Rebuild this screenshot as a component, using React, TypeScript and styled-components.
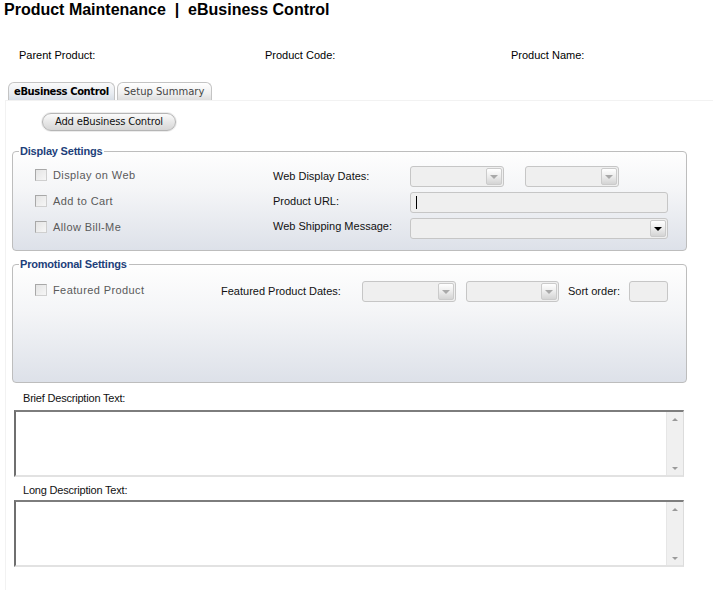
import React from 'react';
import styled, { createGlobalStyle } from 'styled-components';

const GlobalStyle = createGlobalStyle`
  html, body {
    margin: 0;
    padding: 0;
    background: #ffffff;
    font-family: 'Liberation Sans', Arial, sans-serif;
    font-size: 11px;
    color: #000;
  }
`;

const Page = styled.div`
  width: 713px;
  height: 590px;
  overflow: hidden;
`;

const Title = styled.h1`
  margin: 0;
  padding-left: 4px;
  font-size: 16px;
  line-height: 19px;
  font-weight: bold;
  white-space: pre;
`;

const InfoRow = styled.div`
  display: grid;
  grid-template-columns: 246px 246px 1fr;
  margin-top: 30px;
  padding-left: 19px;
  line-height: 13px;
`;

const TabStrip = styled.div`
  display: flex;
  gap: 2px;
  margin-top: 20px;
  padding-left: 8px;
`;

const Tab = styled.div<{ $active?: boolean }>`
  height: 18px;
  box-sizing: border-box;
  padding: ${p => (p.$active ? '0 5px' : '0 7px 0 6px')};
  border: 1px solid #c4c4c4;
  border-bottom: none;
  border-radius: 6px 6px 0 0;
  font-family: 'DejaVu Sans', Tahoma, sans-serif;
  font-size: 10px;
  line-height: 17px;
  font-weight: ${p => (p.$active ? 'bold' : 'normal')};
  color: ${p => (p.$active ? '#000' : '#444')};
  letter-spacing: ${p => (p.$active ? '-0.4px' : '0')};
  background: ${p =>
    p.$active
      ? 'linear-gradient(#fafafa, #e9edf2 60%, #d8dee6)'
      : 'linear-gradient(#ffffff, #f0f0f0 60%, #dedede)'};
`;

const Panel = styled.div`
  margin-left: 5px;
  border-left: 1px solid #f2f2f2;
  border-top: 1px solid #f2f2f2;
  padding: 12px 0 30px 6px;
`;

const PillButton = styled.button`
  display: block;
  margin-left: 30px;
  height: 18px;
  padding: 0 12px;
  border: 1px solid #b5b5b5;
  border-radius: 9px;
  background: linear-gradient(#fbfbfb, #e6e6e6 55%, #d6d6d6);
  box-shadow: 0 0 0 1px #ececec;
  font-family: 'DejaVu Sans', Tahoma, sans-serif;
  font-size: 10px;
  letter-spacing: -0.2px;
  color: #111;
  line-height: 16px;
`;

const Group = styled.fieldset<{ $gap: number; $top: number; $bottom: number }>`
  margin: ${p => p.$gap}px 0 0 0;
  width: 675px;
  box-sizing: border-box;
  padding: ${p => p.$top}px 18px ${p => p.$bottom}px 22px;
  border: 1px solid #bdbdbd;
  border-radius: 4px;
  background: linear-gradient(#fefefe, #f4f5f7 40%, #dde1e9);
`;

const Legend = styled.legend`
  margin-left: -16px;
  padding: 0 2px 0 1px;
  font-weight: bold;
  font-size: 11px;
  line-height: 13px;
  letter-spacing: -0.2px;
  color: #1d3f7a;
`;

const DisplayGrid = styled.div`
  display: grid;
  grid-template-columns: 238px 137px 1fr;
  grid-auto-rows: 25px;
  row-gap: 1px;
  align-items: center;
`;

const PromoRow = styled.div`
  display: grid;
  grid-template-columns: 186px 141px 104px 102px 61px 39px;
  height: 26px;
  align-items: center;
`;

const CheckItem = styled.label<{ $lift: number }>`
  display: flex;
  align-items: center;
  gap: 6px;
  color: #5a5a5a;
  letter-spacing: 0.4px;
  margin-top: ${p => -p.$lift}px;
`;

const CheckBox = styled.span`
  width: 12px;
  height: 12px;
  box-sizing: border-box;
  border: 1px solid #a8a8a8;
  border-right-color: #cfcfcf;
  border-bottom-color: #cfcfcf;
  background: linear-gradient(135deg, #e4e4e4, #f6f6f6);
`;

const FieldLabel = styled.span<{ $lift?: number }>`
  color: #111;
  margin-top: ${p => -(p.$lift ?? 0)}px;
`;

const Controls = styled.div`
  display: flex;
  gap: 21px;
`;

const SelectBox = styled.div<{ $width: number }>`
  width: ${p => p.$width}px;
  height: 21px;
  box-sizing: border-box;
  border: 1px solid #c6c6c6;
  border-radius: 3px;
  background: #efefef;
  display: flex;
  justify-content: flex-end;
  align-items: center;
  padding-right: 1px;
`;

const DropButton = styled.span<{ $dark?: boolean }>`
  width: 16px;
  height: 17px;
  box-sizing: border-box;
  border: 1px solid #cbcbcb;
  border-radius: 2px;
  background: linear-gradient(#ffffff, #ececec 50%, #d4d4d4);
  display: flex;
  align-items: center;
  justify-content: center;
  &::after {
    content: '';
    border-top: 4px solid ${p => (p.$dark ? '#000' : '#a9a9a9')};
    border-left: 4px solid transparent;
    border-right: 4px solid transparent;
    margin-top: 1px;
  }
`;

const TextBox = styled.div<{ $width: number }>`
  width: ${p => p.$width}px;
  height: 21px;
  box-sizing: border-box;
  border: 1px solid #c6c6c6;
  border-radius: 3px;
  background: #efefef;
  display: flex;
  align-items: center;
  padding-left: 5px;
`;

const Caret = styled.span`
  width: 1px;
  height: 13px;
  background: #000;
`;

const AreaLabel = styled.div<{ $gap: number }>`
  margin-top: ${p => p.$gap}px;
  padding-left: 11px;
  line-height: 14px;
  letter-spacing: -0.2px;
  color: #111;
`;

const AreaBox = styled.div<{ $gap: number }>`
  margin: ${p => p.$gap}px 0 0 2px;
  width: 670px;
  height: 67px;
  box-sizing: border-box;
  border-top: 2px solid #7d7d7d;
  border-left: 2px solid #6f6f6f;
  border-right: 1px solid #dcdcdc;
  border-bottom: 2px solid #e2e2e2;
  display: flex;
  background: #fff;
`;

const AreaInput = styled.textarea`
  flex: 1;
  border: none;
  outline: none;
  resize: none;
  padding: 2px;
  font-family: 'Liberation Sans', Arial, sans-serif;
  font-size: 11px;
`;

const ScrollBar = styled.div`
  width: 16px;
  background: #f0f0f0;
  border-left: 1px solid #e6e6e6;
  display: flex;
  flex-direction: column;
  justify-content: space-between;
  align-items: center;
  padding: 6px 0 5px;
`;

const Arrow = styled.span<{ $up?: boolean }>`
  border-left: 3px solid transparent;
  border-right: 3px solid transparent;
  ${p => (p.$up ? 'border-bottom' : 'border-top')}: 3px solid #9a9a9a;
`;

const Check = ({ label, lift = 3 }: { label: string; lift?: number }) => (
  <CheckItem $lift={lift}>
    <CheckBox />
    {label}
  </CheckItem>
);

const TextArea = ({ gap }: { gap: number }) => (
  <AreaBox $gap={gap}>
    <AreaInput />
    <ScrollBar>
      <Arrow $up />
      <Arrow />
    </ScrollBar>
  </AreaBox>
);

const App = () => {
  return (
    <Page>
      <GlobalStyle />
      <Title>{'Product Maintenance  |  eBusiness Control'}</Title>
      <InfoRow>
        <span>Parent Product:</span>
        <span>Product Code:</span>
        <span>Product Name:</span>
      </InfoRow>
      <TabStrip>
        <Tab $active>eBusiness Control</Tab>
        <Tab>Setup Summary</Tab>
      </TabStrip>
      <Panel>
        <PillButton>Add eBusiness Control</PillButton>

        <Group $gap={14} $top={6} $bottom={9}>
          <Legend>Display Settings</Legend>
          <DisplayGrid>
            <Check label='Display on Web' />
            <FieldLabel $lift={1}>Web Display Dates:</FieldLabel>
            <Controls>
              <SelectBox $width={94}>
                <DropButton />
              </SelectBox>
              <SelectBox $width={94}>
                <DropButton />
              </SelectBox>
            </Controls>
            <Check label='Add to Cart' />
            <FieldLabel $lift={4}>Product URL:</FieldLabel>
            <TextBox $width={258}>
              <Caret />
            </TextBox>
            <Check label='Allow Bill-Me' />
            <FieldLabel $lift={5}>Web Shipping Message:</FieldLabel>
            <SelectBox $width={258}>
              <DropButton $dark />
            </SelectBox>
          </DisplayGrid>
        </Group>

        <Group $gap={7} $top={7} $bottom={78}>
          <Legend>Promotional Settings</Legend>
          <PromoRow>
            <Check label='Featured Product' lift={2} />
            <FieldLabel>Featured Product Dates:</FieldLabel>
            <SelectBox $width={94}>
              <DropButton />
            </SelectBox>
            <SelectBox $width={93}>
              <DropButton />
            </SelectBox>
            <FieldLabel>Sort order:</FieldLabel>
            <TextBox $width={39} />
          </PromoRow>
        </Group>

        <AreaLabel $gap={8}>Brief Description Text:</AreaLabel>
        <TextArea gap={5} />
        <AreaLabel $gap={6}>Long Description Text:</AreaLabel>
        <TextArea gap={3} />
      </Panel>
    </Page>
  );
};

export default App;
